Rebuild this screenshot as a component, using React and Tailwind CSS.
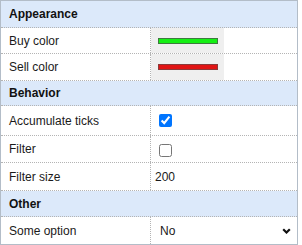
import React, { useState } from 'react';

// Property grid: group headers + label/value rows
const Header = ({ title, h }) => (
    <div className={`flex items-center bg-[#dce9fa] border-b border-dotted border-[#b4b4b4] pl-2 font-bold text-[#111] ${h}`}>
        {title}
    </div>
);

const Row = ({ label, h, last, children }) => (
    <div className={`flex ${h} ${last ? '' : 'border-b border-dotted border-[#b4b4b4]'}`}>
        <div className="w-[150px] shrink-0 flex items-center pl-2 border-r border-dotted border-[#b4b4b4]">
            {label}
        </div>
        <div className="flex-1 flex items-center">{children}</div>
    </div>
);

const Swatch = ({ fill, edge }) => (
    <div className="w-[73px] h-full bg-[#efefef] flex items-center pl-[7px]">
        <div className={`w-[60px] h-[6px] border ${fill} ${edge}`} />
    </div>
);

const App = () => {
    const [accumulate, setAccumulate] = useState(true);
    const [filter, setFilter] = useState(false);

    return (
        <div className="w-[298px] border border-[#b3bdc8] bg-white text-[12px] text-[#1a1a1a] font-['Liberation_Sans',Arial,sans-serif]">
            <Header title="Appearance" h="h-[27px]" />
            <Row label="Buy color" h="h-[26px]">
                <Swatch fill="bg-[#14f014]" edge="border-[#3e7a3e]" />
            </Row>
            <Row label="Sell color" h="h-[27px]">
                <Swatch fill="bg-[#e01414]" edge="border-[#8a3a3a]" />
            </Row>

            <Header title="Behavior" h="h-[25px]" />
            <Row label="Accumulate ticks" h="h-[30px]">
                <input
                    type="checkbox"
                    checked={accumulate}
                    onChange={() => setAccumulate(!accumulate)}
                    className="ml-2 w-[13px] h-[13px]"
                />
            </Row>
            <Row label="Filter" h="h-[27px]">
                <input
                    type="checkbox"
                    checked={filter}
                    onChange={() => setFilter(!filter)}
                    className="ml-2 mt-[3px] w-[13px] h-[13px]"
                />
            </Row>
            <Row label="Filter size" h="h-[28px]">
                <span className="pl-1">200</span>
            </Row>

            <Header title="Other" h="h-[26px]" />
            <Row label="Some option" h="h-[27px]" last>
                <div className="flex-1 flex items-center justify-between pl-[9px] pr-[6px]">
                    <span>No</span>
                    <svg width="9" height="6" viewBox="0 0 9 6" fill="none">
                        <path d="M1.2 1.2 L4.5 4.5 L7.8 1.2" stroke="#111" strokeWidth="2.2" />
                    </svg>
                </div>
            </Row>
        </div>
    );
};

export default App;
